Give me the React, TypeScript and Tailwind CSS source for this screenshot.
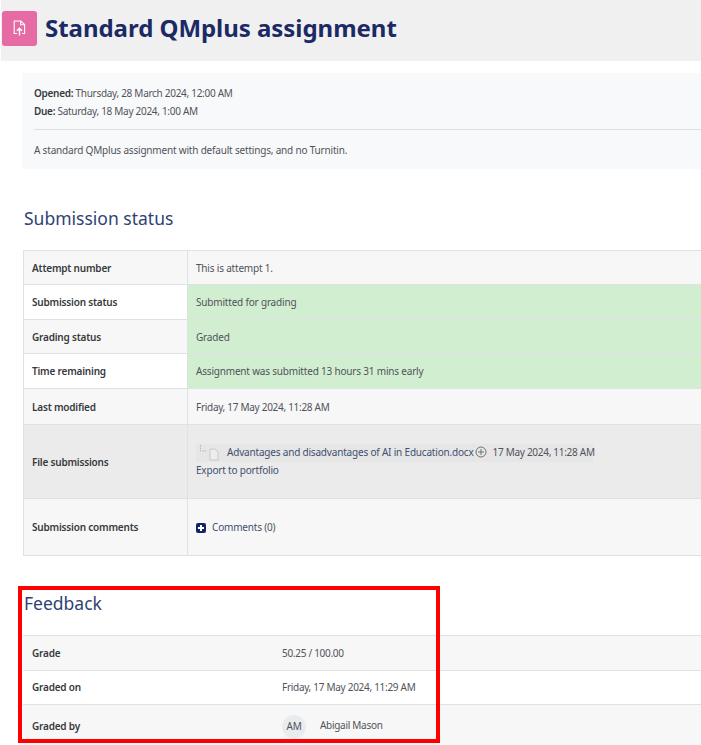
import React from "react";

const font = { fontFamily: '"Noto Sans","Liberation Sans",sans-serif' };

function Row({ label, bg, valueBg, h, children }: { label: string; bg: string; valueBg?: string; h: string; children: React.ReactNode }) {
  return (
    <div className={`flex border-b border-[#dee2e6] ${h} ${bg}`}>
      <div className="w-[164px] shrink-0 flex items-center pl-2 pt-px text-[10px] tracking-[-0.2px] font-semibold text-[#373a3c] border-r border-[#dee2e6]">{label}</div>
      <div className={`flex-1 flex items-center pl-2 pt-px text-[10px] tracking-[-0.19px] text-[#50535a] ${valueBg ?? ""}`}>{children}</div>
    </div>
  );
}

function FbRow({ label, bg, h, children }: { label: string; bg: string; h: string; children: React.ReactNode }) {
  return (
    <div className={`flex border-b border-[#dee2e6] ${h} ${bg}`}>
      <div className="w-[259px] shrink-0 flex items-center pl-[9px] text-[10px] tracking-[-0.2px] font-semibold text-[#373a3c]">{label}</div>
      <div className="flex-1 flex items-center text-[10px] tracking-[-0.29px] text-[#50535a]">{children}</div>
    </div>
  );
}

export default function App() {
  return (
    <div className="relative w-[701px] h-[745px] overflow-hidden bg-white pl-px" style={font}>
      <header className="h-[61px] bg-[#f0f0f0] flex items-center gap-2 pl-px pb-[5px]">
        <div className="w-[35px] h-[35px] rounded-[3px] bg-[#e66aa3] flex items-center justify-center">
          <svg width="13" height="16" viewBox="0 0 13 16" fill="none" stroke="white" strokeWidth="1.1">
            <path d="M4 13.5H1.2V1h6.6l3.8 3.6v8.9H9" />
            <path d="M7.6 1v3.8h4" />
            <path d="M6.5 15.5V8.5M4 10.8 6.5 8.3 9 10.8" strokeWidth="1.4" />
          </svg>
        </div>
        <h1 className="text-[24px] font-bold text-[#1b2a66] leading-none tracking-[-0.04px]">Standard QMplus assignment</h1>
      </header>

      <section className="ml-[21px] mt-3 h-[96px] bg-[#f8f9fa] pl-3 pt-[12px] text-[10px] tracking-[-0.19px] text-[#50535a]">
        <div className="h-[17.5px] leading-[17.5px] tracking-[-0.29px]"><span className="font-semibold text-[#373a3c]">Opened:</span> Thursday, 28 March 2024, 12:00 AM</div>
        <div className="h-[17.5px] leading-[17.5px] tracking-[-0.29px]"><span className="font-semibold text-[#373a3c]">Due:</span> Saturday, 18 May 2024, 1:00 AM</div>
        <div className="border-t border-[#dcdee0] mt-[9px] pt-[12px] leading-[16px]">A standard QMplus assignment with default settings, and no Turnitin.</div>
      </section>

      <h2 className="ml-[23px] mt-[37px] h-[24px] text-[17.5px] leading-[24px] text-[#2f4373]">Submission status</h2>

      <div className="ml-[22px] mt-[20px] border-t border-l border-[#dee2e6]">
        <Row label="Attempt number" bg="bg-[#f7f7f7]" h="h-[34px]">This is attempt 1.</Row>
        <Row label="Submission status" bg="bg-white" valueBg="bg-[#d2eed0] self-stretch" h="h-[35px]">Submitted for grading</Row>
        <Row label="Grading status" bg="bg-[#f7f7f7]" valueBg="bg-[#d2eed0] self-stretch" h="h-[34px]">Graded</Row>
        <Row label="Time remaining" bg="bg-white" valueBg="bg-[#d2eed0] self-stretch" h="h-[35px]">Assignment was submitted 13 hours 31 mins early</Row>
        <Row label="Last modified" bg="bg-[#f7f7f7]" h="h-[36px]"><span className="tracking-[-0.29px]">Friday, 17 May 2024, 11:28 AM</span></Row>
        <Row label="File submissions" bg="bg-[#ebebeb]" h="h-[74px]">
          <div className="pb-[2px]">
            <div className="flex items-center h-[18px] w-[397px] bg-[#e6e6e6] whitespace-nowrap">
              <svg width="30" height="18" viewBox="0 0 30 18" fill="none" className="shrink-0 mr-[1px]">
                <path d="M4.5 1v6h6" stroke="#b5b5b5" strokeWidth="1" strokeDasharray="1.5 1" />
                <path d="M14 5h5l3 3v8h-8z" fill="#ededed" stroke="#c8c8c8" />
              </svg>
              <span className="text-[#3f4f70]">Advantages and disadvantages of AI in Education.docx</span>
              <svg width="12" height="12" viewBox="0 0 12 12" fill="none" stroke="#555" strokeWidth="0.8" className="mx-[1px] shrink-0 -mt-[1px]">
                <circle cx="6" cy="6" r="5" />
                <path d="M6 3v6M3 6h6" />
              </svg>
              <span className="ml-[5px] tracking-[-0.29px]">17 May 2024, 11:28 AM</span>
            </div>
            <div className="leading-[17px] text-[#3f4f70]">Export to portfolio</div>
          </div>
        </Row>
        <Row label="Submission comments" bg="bg-[#f7f7f7]" h="h-[57px]">
          <div className="flex items-center gap-[6px]">
            <span className="w-[10px] h-[10px] rounded-[2px] bg-[#14246a] flex items-center justify-center">
              <svg width="8" height="8" viewBox="0 0 8 8" stroke="white" strokeWidth="2"><path d="M4 1v6M1 4h6" /></svg>
            </span>
            <span className="text-[#3f4f70]">Comments <span className="text-[#50535a]">(0)</span></span>
          </div>
        </Row>
      </div>

      <h2 className="ml-[23px] mt-[35px] h-[24px] text-[17.5px] leading-[24px] text-[#2f4373]">Feedback</h2>

      <div className="ml-[22px] mt-[20px] border-t border-[#dee2e6]">
        <FbRow label="Grade" bg="bg-[#f7f7f7]" h="h-[35px]">50.25 / 100.00</FbRow>
        <FbRow label="Graded on" bg="bg-white" h="h-[34px]">Friday, 17 May 2024, 11:29 AM</FbRow>
        <FbRow label="Graded by" bg="bg-[#f7f7f7]" h="h-[44px]">
          <span className="w-6 h-6 rounded-full bg-[#e9ecef] flex items-center justify-center mr-[14px] text-[10px]">AM</span>
          <span className="-mt-[3px]">Abigail Mason</span>
        </FbRow>
      </div>

      <div className="absolute left-[18px] top-[586px] w-[422px] h-[157px] border-[4px] border-[#fe0000]" />
    </div>
  );
}
